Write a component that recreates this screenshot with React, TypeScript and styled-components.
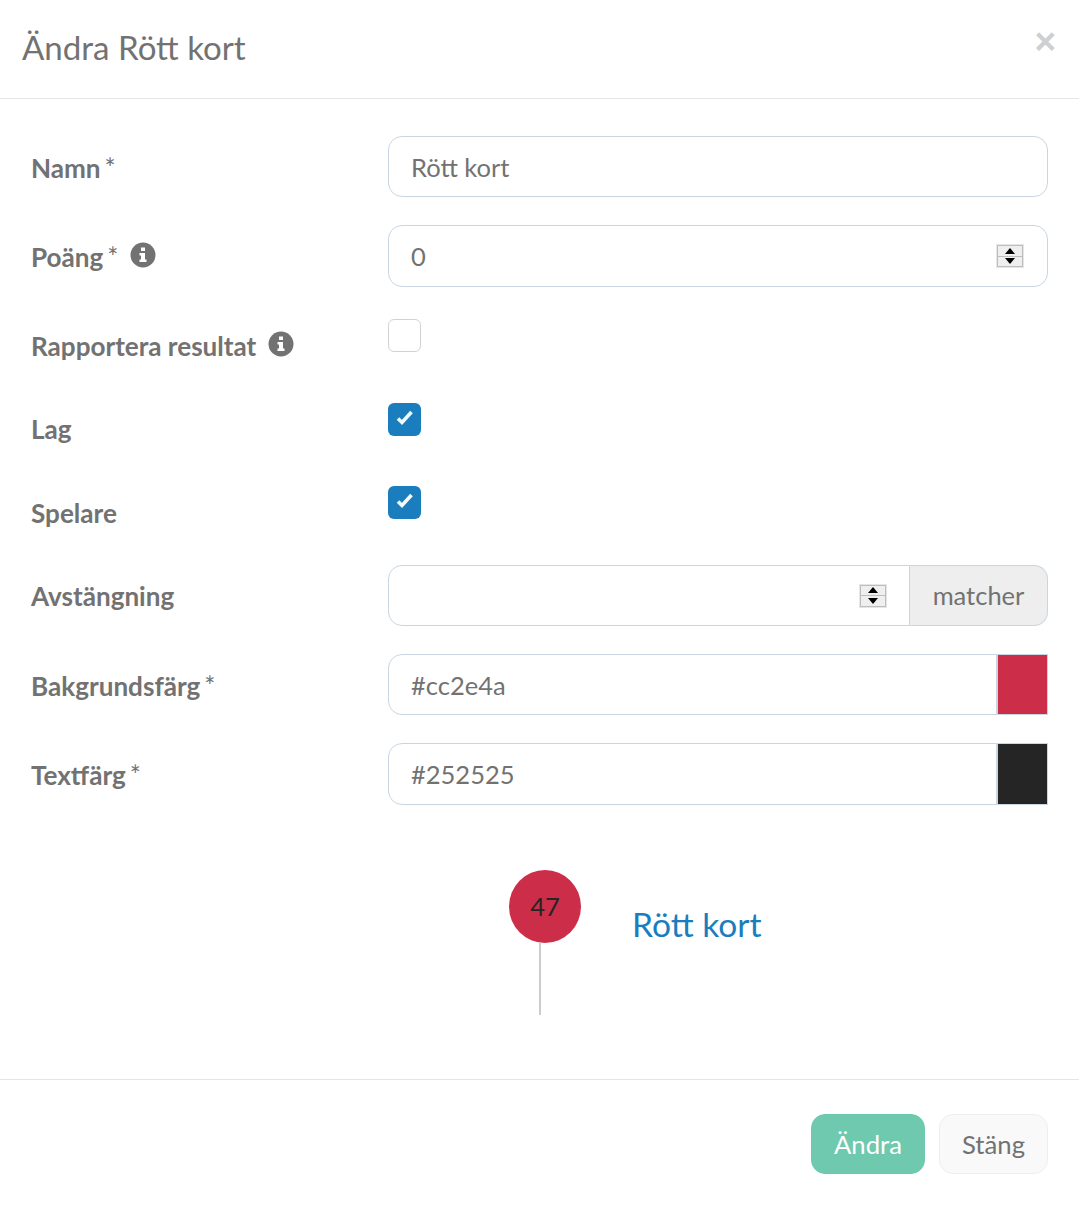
import React from "react";
import styled, { createGlobalStyle } from "styled-components";

const Global = createGlobalStyle`
  html, body { margin: 0; padding: 0; background: #fff; }
  body { font-family: Lato, "Liberation Sans", sans-serif; color: #727272; }
  * { box-sizing: border-box; }
`;

const Modal = styled.div`
  width: 1079px;
  height: 1206px;
  display: flex;
  flex-direction: column;
  background: #fff;
`;

const Header = styled.header`
  height: 99px;
  flex: none;
  border-bottom: 1px solid #e5e5e5;
  padding: 24px 23px 0 22px;
  display: flex;
  justify-content: space-between;
  align-items: flex-start;
`;

const Title = styled.h4`
  margin: 0;
  font-size: 33.1px;
  line-height: 47px;
  font-weight: 400;
  color: #727272;
`;

const Close = styled.span`
  font-family: "Liberation Sans", sans-serif;
  font-size: 37px;
  line-height: 36px;
  font-weight: 700;
  color: #cfcfcf;
`;

const Body = styled.div`
  flex: 1;
  padding: 37px 31px 0 31px;
  display: flex;
  flex-direction: column;
`;

const Row = styled.div<{ $h: number }>`
  display: grid;
  grid-template-columns: 357px 1fr;
  height: ${(p) => p.$h}px;
`;

const Label = styled.label<{ $top: number }>`
  padding-top: ${(p) => p.$top}px;
  font-size: 26.1px;
  line-height: 36px;
  font-weight: 700;
  color: #727272;
  display: flex;
  align-items: flex-start;
`;

const Req = styled.span`
  font-weight: 400;
  margin-left: 4px;
`;

const Info = styled.span`
  display: inline-flex;
  margin: 0 0 0 12px;
  padding-top: 3px;
`;

const Input = styled.input<{ $h?: number }>`
  width: 100%;
  height: ${(p) => p.$h ?? 61}px;
  padding: 0 22px;
  border: 1px solid #c9d6e2;
  border-radius: 14px;
  font-family: inherit;
  font-size: 25.5px;
  color: #727272;
  background: #fff;
  outline: none;
  appearance: textfield;
  &::-webkit-inner-spin-button {
    appearance: none;
    display: none;
  }
`;

const Field = styled.div`
  position: relative;
  flex: 1;
  min-width: 0;
  display: flex;
  align-self: start;
`;

const Spinner = styled.div<{ $right: number }>`
  position: absolute;
  top: 50%;
  right: ${(p) => p.$right}px;
  width: 28px;
  height: 24px;
  transform: translateY(-50%);
  display: flex;
  flex-direction: column;
  gap: 1px;
  padding: 1px;
  background: #bdbdbd;
  border: 1px solid #e6e6e6;
`;

const SpinButton = styled.span`
  flex: 1;
  background: #efefef;
  display: flex;
  align-items: center;
  justify-content: center;
`;

const Arrow = styled.span<{ $up?: boolean }>`
  width: 0;
  height: 0;
  border-left: 5px solid transparent;
  border-right: 5px solid transparent;
  ${(p) => (p.$up ? "border-bottom: 6px solid #000;" : "border-top: 6px solid #000;")}
`;

const Group = styled.div<{ $h?: number }>`
  display: flex;
  height: ${(p) => p.$h ?? 61}px;
`;

const GroupInput = styled(Input)`
  flex: 1;
  min-width: 0;
  border-radius: 14px 0 0 14px;
`;

const Addon = styled.span`
  width: 138px;
  flex: none;
  display: flex;
  align-items: center;
  justify-content: center;
  background: #eee;
  border: 1px solid #c9d6e2;
  border-left: none;
  border-radius: 0 14px 14px 0;
  font-size: 25.5px;
  color: #727272;
  padding-bottom: 1px;
`;

const Swatch = styled.span<{ $color: string }>`
  width: 51px;
  flex: none;
  background: ${(p) => p.$color};
  border: 1px solid #c9d6e2;
`;

const Check = styled.span<{ $on?: boolean; $top: number }>`
  width: 33px;
  height: 33px;
  margin-top: ${(p) => p.$top}px;
  display: block;
  border-radius: 6px;
  border: ${(p) => (p.$on ? "0" : "1px solid #d2d2d2")};
  background: ${(p) => (p.$on ? "#1a7dbd" : "#fff")};
`;

const Preview = styled.div`
  margin: 65px 0 0 478px;
  display: flex;
  align-items: flex-start;
`;

const Pin = styled.div`
  width: 72px;
  flex: none;
  display: flex;
  flex-direction: column;
`;

const Bubble = styled.div`
  width: 72px;
  height: 73px;
  border-radius: 50%;
  background: #cc2e4a;
  color: #252525;
  font-size: 25.5px;
  padding-bottom: 2px;
  display: flex;
  align-items: center;
  justify-content: center;
`;

const Stem = styled.div`
  width: 2px;
  height: 72px;
  margin-left: 30px;
  background: #ccc;
`;

const EventName = styled.span`
  margin: 31px 0 0 51px;
  font-size: 33.6px;
  line-height: 47px;
  color: #1a7dbd;
`;

const Footer = styled.footer`
  height: 127px;
  flex: none;
  border-top: 1px solid #e5e5e5;
  padding: 34px 31px 0 0;
  display: flex;
  justify-content: flex-end;
  align-items: flex-start;
  gap: 14px;
`;

const Button = styled.button<{ $primary?: boolean }>`
  height: 60px;
  padding: 0;
  width: ${(p) => (p.$primary ? 114 : 109)}px;
  border-radius: 14px;
  font-family: inherit;
  font-size: 25.7px;
  border: 1px solid ${(p) => (p.$primary ? "#6fc9ae" : "#eeeeee")};
  background: ${(p) => (p.$primary ? "#6fc9ae" : "#f9f9f9")};
  color: ${(p) => (p.$primary ? "#fff" : "#727272")};
`;

const InfoIcon = () => (
  <Info>
    <svg width="26" height="26" viewBox="0 0 26 26">
      <circle cx="13" cy="13" r="12.5" fill="#727272" />
      <path
        d="M11 5.5H15V9H11ZM9.5 11H15V17.5H16.5V20H9.5V17.5H11V13.5H9.5Z"
        fill="#fff"
      />
    </svg>
  </Info>
);

const CheckMark = () => (
  <svg width="33" height="33" viewBox="0 0 33 33" fill="none">
    <path d="M10 15.5 L14 19.5 L23.5 9" stroke="#f4f9fc" strokeWidth="3.6" />
  </svg>
);

const Spin = ({ right }: { right: number }) => (
  <Spinner $right={right}>
    <SpinButton><Arrow $up /></SpinButton>
    <SpinButton><Arrow /></SpinButton>
  </Spinner>
);

export default function App() {
  return (
    <Modal>
      <Global />
      <Header>
        <Title>Ändra Rött kort</Title>
        <Close>×</Close>
      </Header>
      <Body>
        <Row $h={89}>
          <Label $top={14}>Namn<Req>*</Req></Label>
          <Input readOnly value="Rött kort" />
        </Row>
        <Row $h={89}>
          <Label $top={14}>Poäng<Req>*</Req><InfoIcon /></Label>
          <Field>
            <Input $h={62} type="number" readOnly value="0" />
            <Spin right={24} />
          </Field>
        </Row>
        <Row $h={89}>
          <Label $top={14}>Rapportera resultat<InfoIcon /></Label>
          <Check $top={5} />
        </Row>
        <Row $h={83}>
          <Label $top={8}>Lag</Label>
          <Check $top={0} $on><CheckMark /></Check>
        </Row>
        <Row $h={79}>
          <Label $top={9}>Spelare</Label>
          <Check $top={0} $on><CheckMark /></Check>
        </Row>
        <Row $h={89}>
          <Label $top={13}>Avstängning</Label>
          <Group>
            <Field>
              <GroupInput type="number" readOnly />
              <Spin right={23} />
            </Field>
            <Addon>matcher</Addon>
          </Group>
        </Row>
        <Row $h={89}>
          <Label $top={14}>Bakgrundsfärg<Req>*</Req></Label>
          <Group>
            <GroupInput readOnly value="#cc2e4a" />
            <Swatch $color="#cc2e4a" />
          </Group>
        </Row>
        <Row $h={62}>
          <Label $top={14}>Textfärg<Req>*</Req></Label>
          <Group $h={62}>
            <GroupInput $h={62} readOnly value="#252525" />
            <Swatch $color="#252525" />
          </Group>
        </Row>
        <Preview>
          <Pin>
            <Bubble>47</Bubble>
            <Stem />
          </Pin>
          <EventName>Rött kort</EventName>
        </Preview>
      </Body>
      <Footer>
        <Button $primary>Ändra</Button>
        <Button>Stäng</Button>
      </Footer>
    </Modal>
  );
}
